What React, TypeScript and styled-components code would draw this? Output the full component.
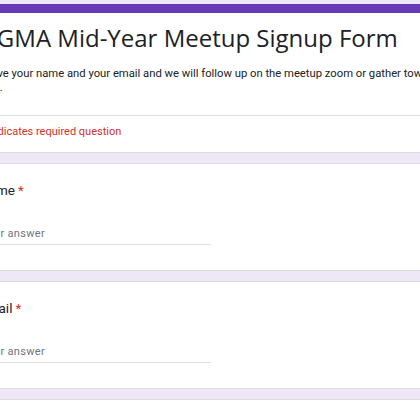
import React from "react";
import styled, { createGlobalStyle } from "styled-components";

const GlobalStyle = createGlobalStyle`
  html, body {
    margin: 0;
    padding: 0;
    background: #ede7f6;
    overflow: hidden;
  }
  body {
    font-family: Roboto, "Liberation Sans", Arial, sans-serif;
    color: #202124;
  }
`;

const Page = styled.div`
  display: flex;
  flex-direction: column;
  gap: 10px;
  padding-top: 4px;
  margin-left: -44px;
  width: 660px;
`;

const Card = styled.section<{ $accent?: boolean }>`
  background: #fff;
  border: 1px solid #dadce0;
  border-radius: 8px;
  ${(p) => (p.$accent ? "border-top: 9px solid #673ab7;" : "")}
  display: flex;
  flex-direction: column;
`;

const HeaderBody = styled.div`
  padding: 9px 24px 0 24px;
`;

const Title = styled.h1`
  margin: 0 0 0 -4px;
  font-family: "Open Sans", Roboto, "Liberation Sans", sans-serif;
  font-size: 24px;
  line-height: 32px;
  font-weight: 400;
  color: #202124;
`;

const Description = styled.p`
  margin: 13px 0 0 6px;
  font-size: 11.25px;
  line-height: 14px;
  color: #202124;
  white-space: nowrap;
`;

const Divider = styled.hr`
  margin: 20px 0 0 0;
  border: 0;
  border-top: 1px solid #dadce0;
`;

const RequiredNote = styled.div`
  padding: 9px 24px 13px 24px;
  font-size: 11px;
  line-height: 14px;
  color: #d93025;
`;

const QuestionBody = styled.div`
  padding: 18px 24px 25px 22px;
  display: flex;
  flex-direction: column;
`;

const Label = styled.div`
  font-size: 13.5px;
  line-height: 16px;
  color: #202124;
`;

const Star = styled.span`
  color: #d93025;
  margin-left: 3px;
`;

const Answer = styled.div`
  margin-top: 29px;
  margin-left: 2px;
  width: 230px;
  font-size: 11px;
  line-height: 14px;
  color: #70757a;
  letter-spacing: 0.3px;
  padding-bottom: 3px;
  border-bottom: 1px solid #e0e0e0;
`;

const Question = ({ label }: { label: string }) => (
  <Card>
    <QuestionBody>
      <Label>
        {label}
        <Star>*</Star>
      </Label>
      <Answer>Your answer</Answer>
    </QuestionBody>
  </Card>
);

export default function App() {
  return (
    <>
      <GlobalStyle />
      <Page>
        <Card $accent>
          <HeaderBody>
            <Title>SIGMA Mid-Year Meetup Signup Form</Title>
            <Description>
              Give your name and your email and we will follow up on the meetup zoom or gather town
              <br />
              on.
            </Description>
          </HeaderBody>
          <Divider />
          <RequiredNote>* Indicates required question</RequiredNote>
        </Card>
        <Question label="Name" />
        <Question label="Email" />
        <Card>
          <QuestionBody>
            <Label>Phone</Label>
          </QuestionBody>
        </Card>
      </Page>
    </>
  );
}
